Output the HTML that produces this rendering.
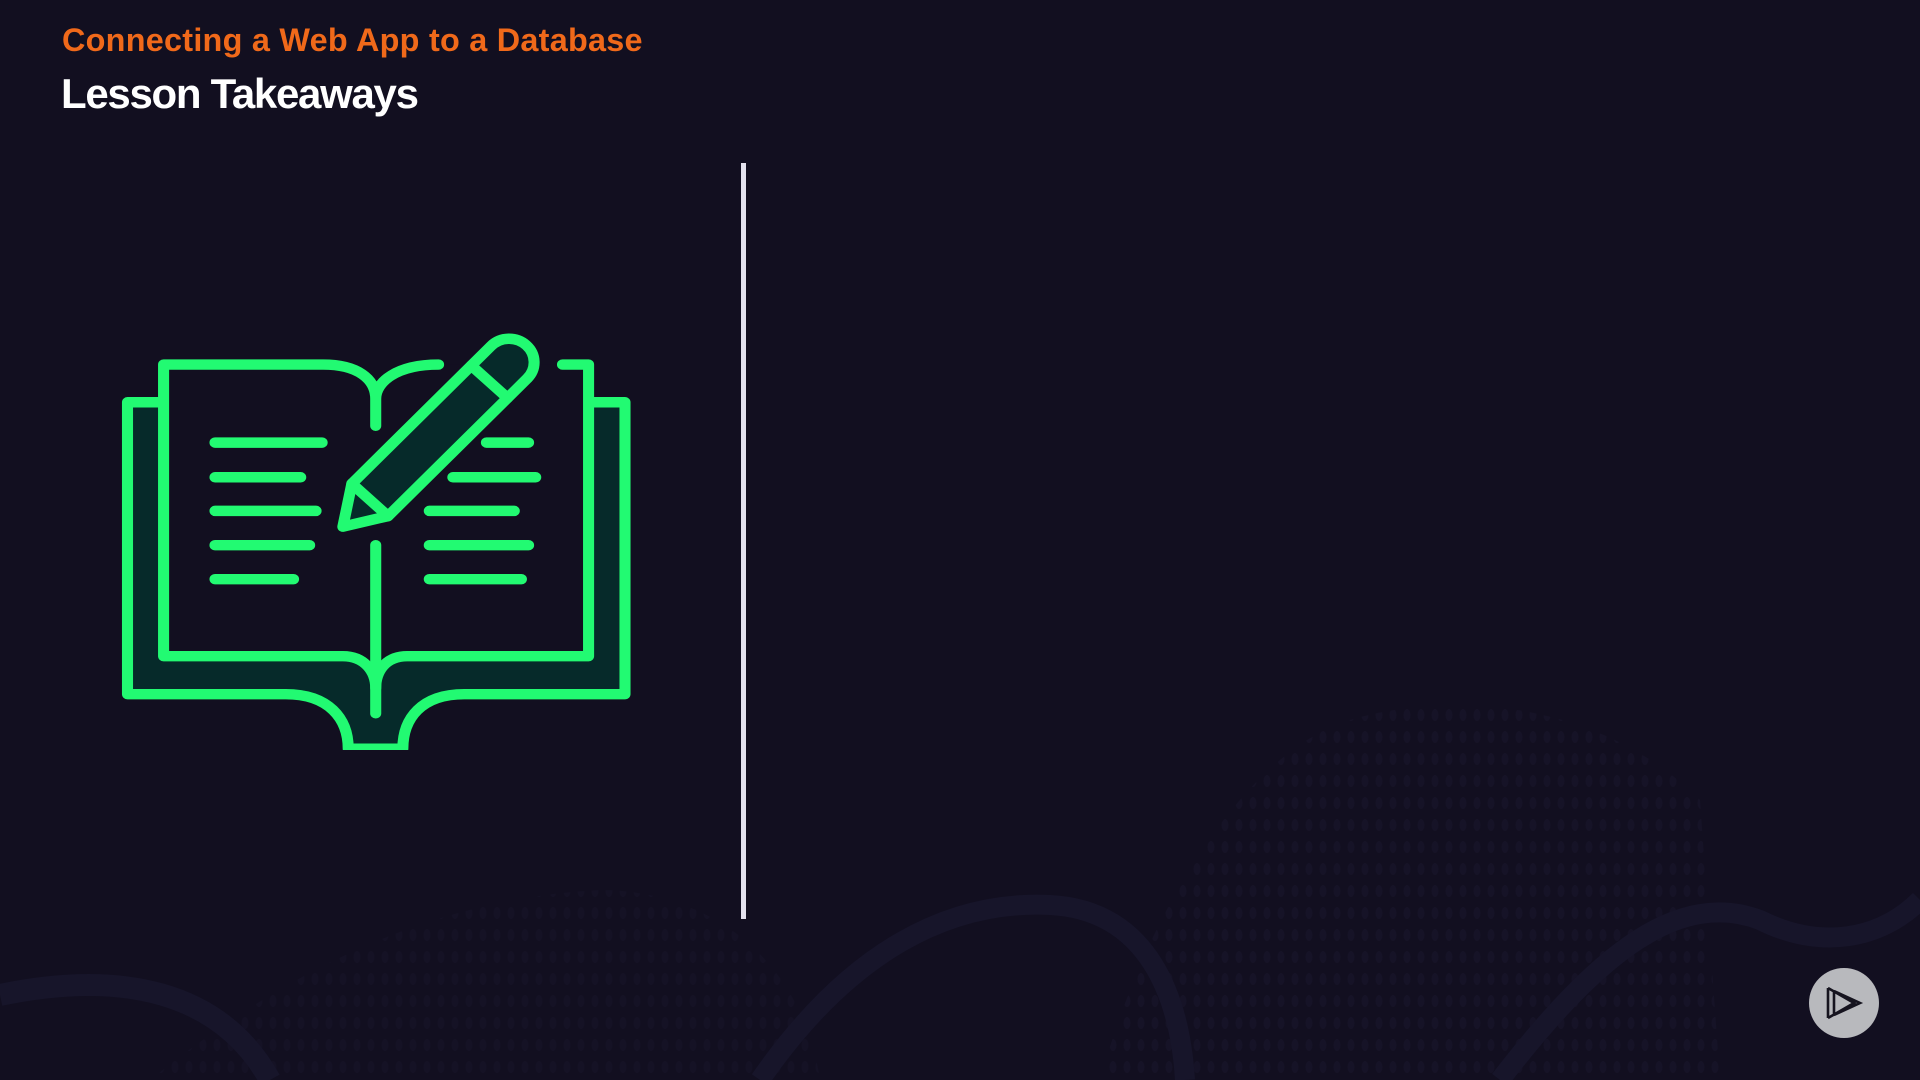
<!DOCTYPE html>
<html><head><meta charset="utf-8"><style>
html,body{margin:0;padding:0;width:1920px;height:1080px;overflow:hidden;background:#120f20;}
.t1{position:absolute;left:62px;top:22px;font:bold 32.4px "Liberation Sans",sans-serif;color:#f0691a;letter-spacing:0.25px;}
.t2{position:absolute;left:61px;top:70px;font:bold 42px "Liberation Sans",sans-serif;color:#fff;letter-spacing:-1.3px;}
.vl{position:absolute;left:741px;top:163px;width:5px;height:756px;background:#e4e2ee;}
</style></head><body>
<svg style="position:absolute;left:0;top:0" width="1920" height="1080">
<defs><pattern id="dots" width="14" height="22" patternUnits="userSpaceOnUse"><ellipse cx="7" cy="11" rx="3.5" ry="6" fill="#18152b"/></pattern></defs>
<path d="M1100 1080 C1150 900 1250 750 1350 720 C1450 690 1600 700 1700 800 L1720 1080 Z" fill="url(#dots)" opacity="0.6"/>
<path d="M150 1080 C250 1000 400 900 600 890 C700 890 800 950 820 1080 Z" fill="url(#dots)" opacity="0.45"/>
<path d="M0 995 C120 970 220 990 270 1080" stroke="#17152a" stroke-width="22" fill="none"/>
<path d="M760 1080 C850 950 950 900 1050 905 C1150 910 1180 1000 1185 1080" stroke="#17152a" stroke-width="20" fill="none"/>
<path d="M1500 1080 C1600 950 1680 890 1760 920 C1820 950 1880 940 1920 900" stroke="#17152a" stroke-width="20" fill="none"/>
</svg>
<div class="t1">Connecting a Web App to a Database</div>
<div class="t2">Lesson Takeaways</div>
<div class="vl"></div>
<svg style="position:absolute;left:100px;top:298px" width="560" height="452" viewBox="0 0 1568 1344" preserveAspectRatio="none">
<g stroke="#22fa72" stroke-width="31" stroke-linecap="round" stroke-linejoin="round">
<path d="M178 310 L77 310 L77 1178 L520 1178 C640 1178 695 1250 695 1340 L848 1340 C848 1250 900 1178 1020 1178 L1470 1178 L1470 310 L1368 310" fill="#062a2a"/>
<path d="M178 198 L625 198 C720 198 772 250 772 300 C772 250 820 198 948 198 L1368 198 L1368 1065 L860 1065 C800 1065 772 1110 772 1160 C772 1110 740 1065 680 1065 L178 1065 Z" fill="#120f20" stroke="none"/>
<path d="M948 198 C830 198 772 250 772 300 L772 380 M772 300 C772 240 720 198 625 198 L178 198 L178 1065 L680 1065 C740 1065 772 1110 772 1160 C772 1110 800 1065 860 1065 L1368 1065 L1368 198 L1295 198" fill="none"/>
<path d="M772 735 L772 1235" fill="none"/>
<path d="M322 430H622M322 533H562M322 633H605M322 735H587M322 836H542M1082 430H1200M988 533H1220M922 633H1160M922 735H1200M922 836H1180" fill="none"/>
<g transform="translate(680 680) rotate(-46.4)">
<path d="M0 0 L110 -70 L675 -70 A70 70 0 0 1 675 70 L110 70 Z" fill="#062a2a"/>
<path d="M110 -70 L110 70 M595 -70 L595 70" fill="none"/>
</g>
</g>
</svg>
<svg style="position:absolute;left:1808px;top:967px" width="72" height="72" viewBox="0 0 72 72">
<circle cx="36" cy="36" r="35" fill="#b8b9bd"/>
<path d="M20 21 L20 51 M20 21 L46 36 L20 51 M26 24 L26 48 M26 24 L52 36 L26 48" stroke="#16141f" stroke-width="2.6" fill="none"/>
</svg>
</body></html>
